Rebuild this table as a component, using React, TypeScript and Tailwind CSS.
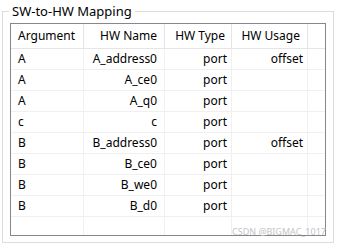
const rows: [string, string, string, string][] = [
  ["A", "A_address0", "port", "offset"],
  ["A", "A_ce0", "port", ""],
  ["A", "A_q0", "port", ""],
  ["c", "c", "port", ""],
  ["B", "B_address0", "port", "offset"],
  ["B", "B_ce0", "port", ""],
  ["B", "B_we0", "port", ""],
  ["B", "B_d0", "port", ""],
]

const cols = "grid grid-cols-[73px_81px_67px_76px_17px]"

export default function App() {
  return (
    <div className="relative h-[246px] w-[338px] bg-white pl-[2px] pt-[11px] font-['Noto_Sans',sans-serif] text-black">
      {/* group box */}
      <div className="relative h-[232px] w-[332px] border border-[#dcdcdc] pl-[7px] pt-[11px]">
        <div className="absolute left-[6px] top-[-10px] bg-white px-[3px] text-[13px] leading-[18px]">
          SW-to-HW Mapping
        </div>

        {/* list view */}
        <div className="h-[213px] w-[316px] border border-[#828790] text-[12px]">
          <div className={`${cols} h-[25px] leading-[24px]`}>
            <div className="border-b border-r border-[#e5e5e5] pl-[7px]">Argument</div>
            <div className="border-b border-r border-[#e5e5e5] pr-[7px] text-right">HW Name</div>
            <div className="border-b border-r border-[#e5e5e5] pr-[6px] text-right">HW Type</div>
            <div className="border-b border-r border-[#e5e5e5] pr-[7px] text-right">HW Usage</div>
            <div className="border-b border-[#e5e5e5]" />
          </div>
          {rows.map((r, i) => (
            <div key={i} className={`${cols} h-[21px] leading-[20px]`}>
              <div className="border-b border-r border-[#f0f0f0] pl-[7px]">{r[0]}</div>
              <div className="border-b border-r border-[#f0f0f0] pr-[7px] text-right">{r[1]}</div>
              <div className="border-b border-r border-[#f0f0f0] pr-[4px] text-right">{r[2]}</div>
              <div className="border-b border-r border-[#f0f0f0] pr-[4px] text-right">{r[3]}</div>
              <div className="border-b border-[#f0f0f0]" />
            </div>
          ))}
          <div className={`${cols} h-[18px]`}>
            <div className="border-r border-[#f0f0f0]" />
            <div className="border-r border-[#f0f0f0]" />
            <div className="border-r border-[#f0f0f0]" />
            <div className="border-r border-[#f0f0f0]" />
            <div />
          </div>
        </div>
      </div>

      <div className="absolute left-[232px] top-[226px] text-[9px] leading-[12px] text-[#c4c4c4]">
        CSDN @BIGMAC_1017
      </div>
    </div>
  )
}
